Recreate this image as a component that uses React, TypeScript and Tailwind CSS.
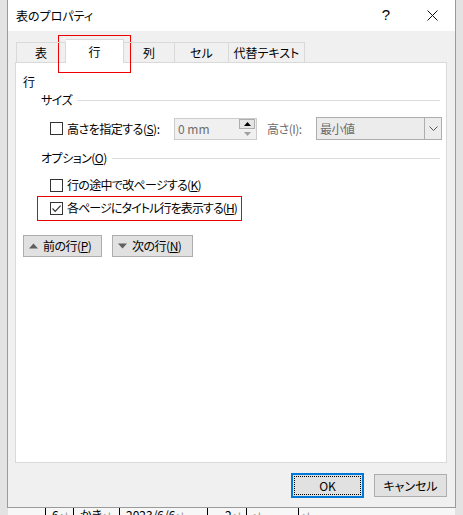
import React from 'react';

const FONT = "font-['Noto_Sans_CJK_JP',sans-serif] [font-feature-settings:'palt']";

function Box({ checked = false }: { checked?: boolean }) {
  return (
    <span className="w-[13px] h-[13px] border border-[#333333] bg-white flex items-center justify-center shrink-0">
      {checked && (
        <svg width="11" height="11" viewBox="0 0 11 11">
          <path d="M1.5 5.5 L4.2 8.3 L9.6 2.6" fill="none" stroke="#333333" strokeWidth="1.2" />
        </svg>
      )}
    </span>
  );
}

function Section({ label }: { label: React.ReactNode }) {
  return (
    <div className="ml-[18px] h-[16px] flex items-center">
      <span className="leading-[16px] whitespace-nowrap">{label}</span>
      <span className="flex-1 h-px bg-[#dcdcdc] ml-[5px]" />
    </div>
  );
}

function Tri({ up }: { up: boolean }) {
  return (
    <svg width="9" height="6" viewBox="0 0 9 6" className="shrink-0">
      <path d={up ? 'M0 5.5 L4.5 0.5 L9 5.5 Z' : 'M0 0.5 L9 0.5 L4.5 5.5 Z'} fill="#5f5f5f" />
    </svg>
  );
}

export default function App() {
  return (
    <div className={`w-[463px] h-[515px] overflow-hidden bg-[#e3e3e3] relative text-[12px] text-black ${FONT}`}>
      {/* dialog window */}
      <div className="ml-[7px] w-[449px] h-[508px] border-x border-b border-[#9a9a9a] bg-[#f0f0f0] flex flex-col">
        <div className="h-[31px] bg-white flex items-center shrink-0">
          <span className="pl-[8px] flex-1 leading-[16px]">表のプロパティ</span>
          <span className="w-[46px] flex justify-center text-[15px] font-['Liberation_Sans',sans-serif]">?</span>
          <span className="w-[46px] flex justify-center">
            <svg width="11" height="11" viewBox="0 0 11 11">
              <path d="M0.5 0.5 L10.5 10.5 M10.5 0.5 L0.5 10.5" stroke="#111" strokeWidth="1" />
            </svg>
          </span>
        </div>

        <div className="flex-1 pl-[7px] pr-[8px] flex flex-col">
          {/* tabs */}
          <div className="mt-[8px] h-[24px] flex items-end ml-[1px] -mb-px relative z-10">
            <div className="w-[50px] h-[20px] border-l border-t border-r border-[#d9d9d9] flex items-center justify-center mb-px">表</div>
            <div className="w-[58px] h-[24px] border-t border-r border-[#d9d9d9] bg-white flex items-center justify-center pt-[1px]">行</div>
            <div className="w-[51px] h-[20px] border-t border-r border-[#d9d9d9] flex items-center justify-center mb-px">列</div>
            <div className="w-[54px] h-[20px] border-t border-r border-[#d9d9d9] flex items-center justify-center mb-px">セル</div>
            <div className="w-[76px] h-[20px] border-t border-r border-[#d9d9d9] flex items-center justify-center mb-px">代替テキスト</div>
          </div>

          {/* panel */}
          <div className="h-[401px] border border-[#d9d9d9] bg-white pl-[7px] pr-[6px] pt-[11px] relative tracking-[-0.5px] whitespace-nowrap">
            <div className="h-[16px] leading-[16px]">行</div>
            <div className="mt-[2px]">
              <Section label="サイズ" />
            </div>

            <div className="mt-[9px] h-[23px] flex items-center">
              <span className="ml-[27px]"><Box /></span>
              <span className="ml-[4px] w-[95px] shrink-0">高さを指定する(<u>S</u>):</span>
              <div className="ml-[12px] w-[83px] h-[22px] border border-[#cccccc] bg-[#f0f0f0] flex items-center shrink-0">
                <span className="flex-1 pl-[3px] text-[#6d6d6d] tracking-normal">0 mm</span>
                <div className="w-[16px] h-[20px] flex flex-col mr-[1px]">
                  <div className="h-[10px] border border-[#adadad] bg-[#e5e5e5] flex items-center justify-center">
                    <svg width="7" height="4" viewBox="0 0 7 4"><path d="M0 4 L3.5 0 L7 4 Z" fill="#000" /></svg>
                  </div>
                  <div className="h-[10px] flex items-center justify-center">
                    <svg width="7" height="4" viewBox="0 0 7 4"><path d="M0 0 L7 0 L3.5 4 Z" fill="#a0a0a0" /></svg>
                  </div>
                </div>
              </div>
              <span className="ml-[10px] w-[39px] shrink-0 text-[#6d6d6d]">高さ(I):</span>
              <div className="ml-[10px] w-[126px] h-[23px] border border-[#adadad] bg-[#ececec] flex items-center shrink-0">
                <span className="flex-1 pl-[3px] text-[#6d6d6d]">最小値</span>
                <div className="w-[17px] h-full border-l border-[#adadad] flex items-center justify-center">
                  <svg width="9" height="5" viewBox="0 0 9 5"><path d="M0.5 0.5 L4.5 4.5 L8.5 0.5" fill="none" stroke="#555" strokeWidth="1" /></svg>
                </div>
              </div>
            </div>

            <div className="mt-[10px]">
              <Section label={<>オプション(<u>O</u>)</>} />
            </div>

            <div className="mt-[9px] h-[20px] flex items-center">
              <span className="ml-[27px]"><Box /></span>
              <span className="ml-[4px] tracking-[-0.7px]">行の途中で改ページする(<u>K</u>)</span>
            </div>
            <div className="mt-[3px] h-[20px] flex items-center">
              <span className="ml-[27px]"><Box checked /></span>
              <span className="ml-[4px] tracking-[-0.9px]">各ページにタイトル行を表示する(<u>H</u>)</span>
            </div>

            <div className="mt-[17px] flex gap-[10px]">
              <div className="w-[79px] h-[22px] border border-[#adadad] bg-[#e1e1e1] flex items-center pl-[5px] gap-[5px]">
                <Tri up />
                <span>前の行(<u>P</u>)</span>
              </div>
              <div className="w-[81px] h-[22px] border border-[#adadad] bg-[#e1e1e1] flex items-center pl-[5px] gap-[5px]">
                <Tri up={false} />
                <span>次の行(<u>N</u>)</span>
              </div>
            </div>

            {/* annotation */}
            <div className="absolute left-[21px] top-[133px] w-[205px] h-[25px] border border-[#ee0000]" />
          </div>

          {/* footer */}
          <div className="mt-[10px] flex justify-end items-start gap-[10px]">
            <div className="w-[73px] h-[25px] border-2 border-[#0078d7] bg-[#e1e1e1] p-[1px]">
              <div className="w-full h-full border border-dotted border-black flex items-center justify-center">OK</div>
            </div>
            <div className="mt-px w-[73px] h-[23px] border border-[#adadad] bg-[#e1e1e1] flex items-center justify-center">キャンセル</div>
          </div>
        </div>
      </div>

      {/* document table behind the dialog */}
      <div className="ml-[8px] w-[447px] h-[7px] bg-[#f7f7f7] flex overflow-hidden text-[12px] leading-[14px]">
        <div className="w-[37px]" />
        <div className="w-[28px] border-l border-black pl-[6px]">6<span className="text-[#9a9a9a]">↵</span></div>
        <div className="w-[46px] border-l border-black pl-[6px]">かき<span className="text-[#9a9a9a]">↵</span></div>
        <div className="w-[88px] border-l border-black pl-[6px]">2023/6/6<span className="text-[#9a9a9a]">↵</span></div>
        <div className="w-[39px] border-l border-black pl-[17px]">2<span className="text-[#9a9a9a]">↵</span></div>
        <div className="w-[52px] border-l border-black pl-[5px] text-[#9a9a9a]">↵</div>
        <div className="flex-1 border-l border-black pl-[2px] text-[#9a9a9a]">↵</div>
      </div>

      {/* annotation around the active tab */}
      <div className="absolute left-[58px] top-[35px] w-[73px] h-[38px] border border-[#ee0000]" />
    </div>
  );
}
